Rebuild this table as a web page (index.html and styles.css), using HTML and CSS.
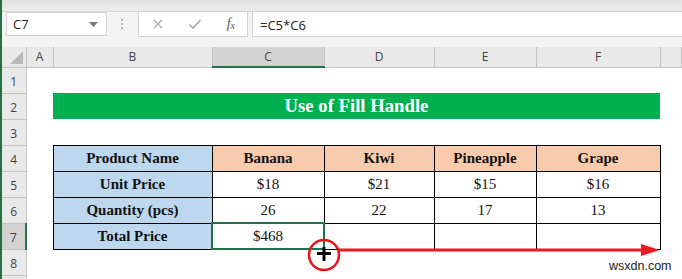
FILE: index.html
```html
<!DOCTYPE html>
<html lang="en">
<head>
    <meta charset="UTF-8">
    <title>Use of Fill Handle</title>
    <link rel="stylesheet" href="styles.css">
</head>
<body>
    <div class="app">
        <div class="ribbon-edge"></div>

        <!-- name box + formula bar -->
        <div class="formula-bar">
            <div class="name-box">
                <span>C7</span>
                <svg class="caret" width="9" height="5" viewBox="0 0 9 5"><path d="M0 0h9L4.5 5z" fill="#777"/></svg>
            </div>
            <div class="grip"><i></i><i></i><i></i></div>
            <div class="fx-box">
                <svg width="12" height="12" viewBox="0 0 12 12"><path d="M2 2l8 8M10 2l-8 8" stroke="#a8a8a8" stroke-width="1.3"/></svg>
                <svg width="14" height="12" viewBox="0 0 14 12"><path d="M1.5 6.5l3.5 3.5 7.5-8" stroke="#a8a8a8" stroke-width="1.6" fill="none"/></svg>
                <span class="fx">f<sub>x</sub></span>
            </div>
            <div class="formula-input">=C5*C6</div>
        </div>

        <div class="sheet-wrap">
            <table class="sheet">
                <colgroup>
                    <col class="c-rowhead">
                    <col class="c-a">
                    <col class="c-b">
                    <col class="c-c">
                    <col class="c-d">
                    <col class="c-e">
                    <col class="c-f">
                    <col>
                </colgroup>
                <tr class="col-heads">
                    <th class="corner"><span class="corner-tri"></span></th>
                    <th>A</th>
                    <th>B</th>
                    <th class="active-col">C</th>
                    <th>D</th>
                    <th>E</th>
                    <th>F</th>
                    <th></th>
                </tr>
                <tr>
                    <th class="row-head">1</th>
                    <td></td><td></td><td></td><td></td><td></td><td></td><td></td>
                </tr>
                <tr>
                    <th class="row-head">2</th>
                    <td></td>
                    <td class="banner" colspan="5">Use of Fill Handle</td>
                    <td></td>
                </tr>
                <tr>
                    <th class="row-head">3</th>
                    <td></td><td></td><td></td><td></td><td></td><td></td><td></td>
                </tr>
                <tr>
                    <th class="row-head">4</th>
                    <td></td>
                    <td class="cell label">Product Name</td>
                    <td class="cell fruit">Banana</td>
                    <td class="cell fruit">Kiwi</td>
                    <td class="cell fruit">Pineapple</td>
                    <td class="cell fruit">Grape</td>
                    <td></td>
                </tr>
                <tr>
                    <th class="row-head">5</th>
                    <td></td>
                    <td class="cell label">Unit Price</td>
                    <td class="cell">$18</td>
                    <td class="cell">$21</td>
                    <td class="cell">$15</td>
                    <td class="cell">$16</td>
                    <td></td>
                </tr>
                <tr>
                    <th class="row-head">6</th>
                    <td></td>
                    <td class="cell label">Quantity (pcs)</td>
                    <td class="cell">26</td>
                    <td class="cell">22</td>
                    <td class="cell">17</td>
                    <td class="cell">13</td>
                    <td></td>
                </tr>
                <tr>
                    <th class="row-head active-row">7</th>
                    <td></td>
                    <td class="cell label">Total Price</td>
                    <td class="cell selected">$468</td>
                    <td class="cell"></td>
                    <td class="cell"></td>
                    <td class="cell"></td>
                    <td></td>
                </tr>
                <tr>
                    <th class="row-head">8</th>
                    <td></td><td></td><td></td><td></td><td></td><td></td><td></td>
                </tr>
                <tr>
                    <th class="row-head"></th>
                    <td></td><td></td><td></td><td></td><td></td><td></td><td></td>
                </tr>
            </table>

            <!-- fill handle drag marker -->
            <svg class="drag-mark" width="682" height="60" viewBox="0 0 682 60">
                <path d="M339 23H646" stroke="#ec1c24" stroke-width="3"/>
                <path d="M641 17L660 23L641 29z" fill="#ec1c24"/>
                <ellipse cx="324" cy="28" rx="15" ry="15" fill="none" stroke="#e8141b" stroke-width="2.5"/>
                <path d="M324 20v14M317 26.5h14" stroke="#000" stroke-width="3"/>
            </svg>

            <div class="watermark">wsxdn.com</div>
        </div>
    </div>
</body>
</html>
```

FILE: styles.css
```css
* {
    margin: 0;
    padding: 0;
    box-sizing: border-box;
}

:root {
    --excel-green: #217346;
    --chrome-bg: #f3f3f3;
    --head-bg: #e9e9e9;
    --head-line: #c4c4c4;
    --head-text: #444;
    --cell-font: "Liberation Serif", "Times New Roman", serif;
}

body {
    width: 682px;
    height: 279px;
    overflow: hidden;
    background: #fff;
    font-family: "Open Sans", "Liberation Sans", sans-serif;
}

.app {
    height: 279px;
    overflow: hidden;
    border-left: 2px solid var(--excel-green);
    background: var(--chrome-bg);
}

.ribbon-edge {
    height: 12px;
    background: linear-gradient(#e2e2e2, #ececec);
    border-bottom: 1px solid #d8d8d8;
}

/* 公式栏 */
.formula-bar {
    display: flex;
    align-items: flex-start;
    height: 35px;
    padding-left: 4px;
}

.name-box {
    display: flex;
    align-items: center;
    justify-content: space-between;
    width: 101px;
    height: 24px;
    padding: 0 8px 0 6px;
    background: #fff;
    border: 1px solid #d2d2d2;
    font-size: 13px;
    color: #222;
}

.grip {
    display: flex;
    flex-direction: column;
    gap: 2px;
    width: 31px;
    padding: 7px 0 0 14px;
}

.grip i {
    width: 2px;
    height: 2px;
    background: #b4b4b4;
}

.fx-box {
    display: flex;
    align-items: center;
    justify-content: space-between;
    width: 110px;
    height: 26px;
    margin-top: -1px;
    padding: 0 12px 0 13px;
    background: #fff;
    border: 1px solid #d2d2d2;
}

.fx {
    font-family: var(--cell-font);
    font-style: italic;
    font-size: 14px;
    color: #555;
}

.fx sub {
    font-size: 10px;
    vertical-align: -1px;
}

.formula-input {
    flex: 1;
    height: 26px;
    margin: -1px 0 0 4px;
    padding: 4px 7px;
    background: #fff;
    border: 1px solid #d2d2d2;
    border-right: none;
    font-size: 13px;
    color: #222;
}

/* 表格区域 */
.sheet-wrap {
    position: relative;
}

.sheet {
    width: 680px;
    table-layout: fixed;
    border-collapse: collapse;
    background: #fff;
}

.c-rowhead { width: 24px; }
.c-a { width: 27px; }
.c-b { width: 159px; }
.c-c { width: 112px; }
.c-d { width: 110px; }
.c-e { width: 102px; }
.c-f { width: 124px; }

.sheet tr {
    height: 26px;
}

.sheet tr.col-heads {
    height: 20px;
}

.col-heads th {
    background: var(--head-bg);
    border-right: 1px solid var(--head-line);
    border-bottom: 1px solid var(--head-line);
    font-weight: normal;
    font-size: 12px;
    color: var(--head-text);
}

.col-heads th.active-col {
    background: #d3d3d3;
    border-bottom: 2px solid var(--excel-green);
}

.corner {
    position: relative;
}

.corner-tri {
    position: absolute;
    right: 3px;
    bottom: 3px;
    border-style: solid;
    border-width: 0 0 13px 13px;
    border-color: transparent transparent #b9b9b9 transparent;
}

.row-head {
    background: var(--head-bg);
    border-right: 1px solid var(--head-line);
    border-bottom: 1px solid var(--head-line);
    font-weight: normal;
    font-size: 12px;
    color: var(--head-text);
    padding-top: 3px;
}

.row-head.active-row {
    background: #d3d3d3;
    border-right: 2px solid var(--excel-green);
}

.sheet td {
    font-family: var(--cell-font);
}

.banner {
    background: #00b050;
    color: #fff;
    text-align: center;
    font-weight: bold;
    font-size: 18.7px;
}

.cell {
    border: 1px solid #000;
    text-align: center;
    font-size: 15px;
    color: #111;
    padding-top: 1px;
}

.cell.label {
    background: #bdd7ee;
    font-weight: bold;
}

.cell.fruit {
    background: #f8cbad;
    font-weight: bold;
}

.cell.selected {
    outline: 2px solid var(--excel-green);
    outline-offset: -1px;
}

.drag-mark {
    position: absolute;
    left: -2px;
    top: 180px;
}

.watermark {
    position: absolute;
    left: 607px;
    top: 212px;
    font-family: "Liberation Sans", sans-serif;
    font-size: 12.5px;
    color: #222;
}
```
